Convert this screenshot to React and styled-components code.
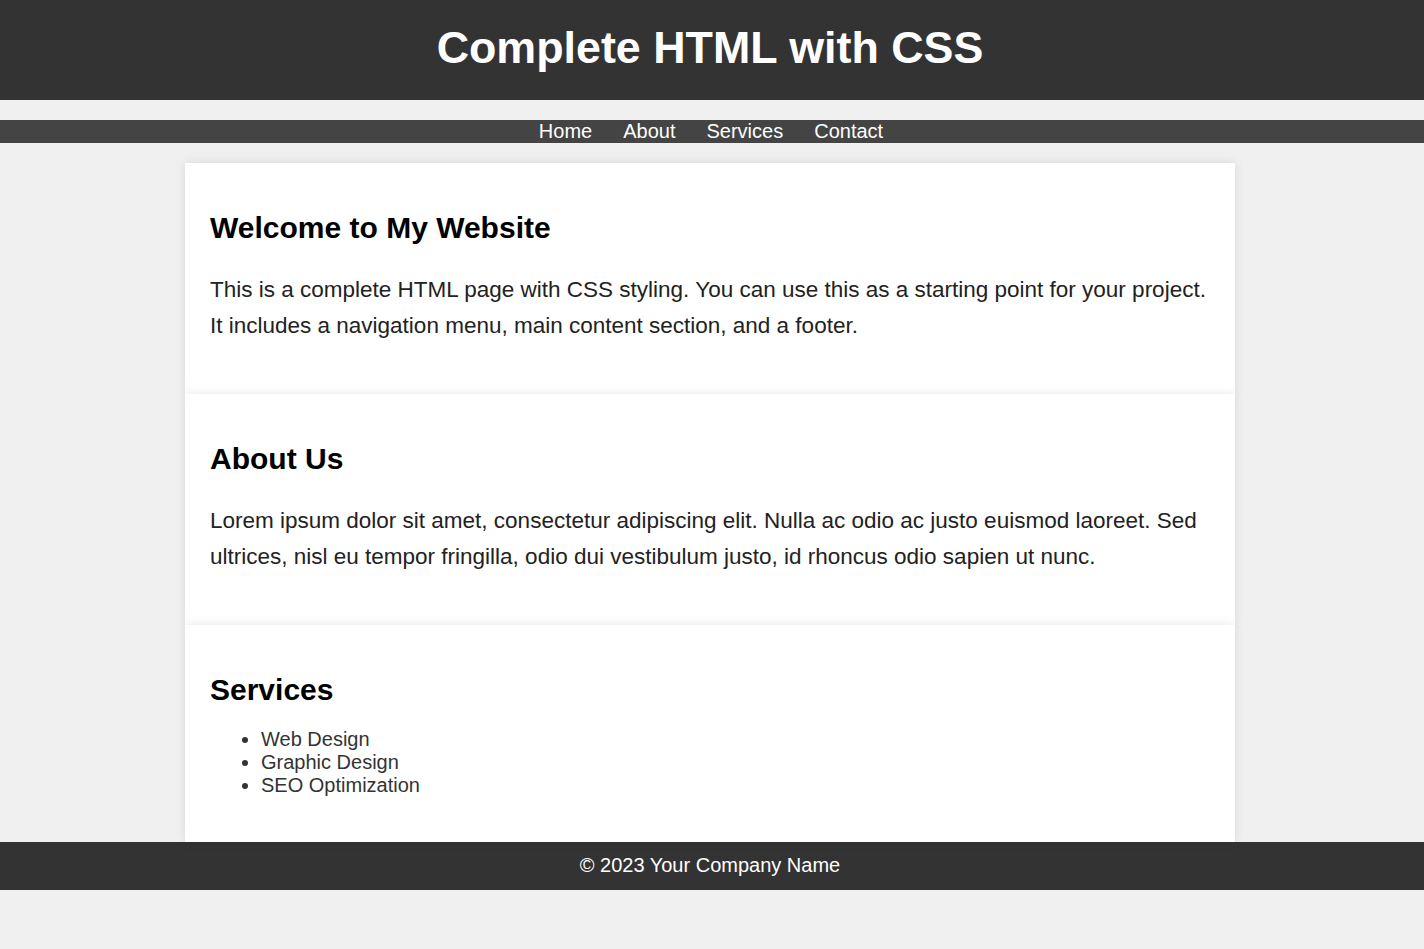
import React from "react";
import styled, { createGlobalStyle } from "styled-components";

const Global = createGlobalStyle`
  html, body {
    margin: 0;
    padding: 0;
    background: #f0f0f0;
    font-family: "Liberation Sans", Arial, sans-serif;
    color: #222;
  }
`;

const Header = styled.header`
  background: #333;
  color: #fff;
  text-align: center;
  padding: 22px 0 26px;
`;

const Title = styled.h1`
  margin: 0;
  font-size: 44.8px;
  font-weight: bold;
  line-height: 51.5px;
  position: relative;
  left: -2px;
`;

const Nav = styled.nav`
  margin-top: 20px;
  background: #444;
  display: flex;
  justify-content: center;
  gap: 31px;
  padding-right: 2px;
`;

const NavLink = styled.a`
  color: #fff;
  text-decoration: none;
  font-size: 20px;
  line-height: 23px;
`;

const Main = styled.main`
  width: 1050px;
  margin: 20px auto 0;
  position: relative;
  left: -2px;
`;

const Section = styled.section`
  background: #fff;
  padding: 25px;
  box-shadow: 0 0 10px rgba(0, 0, 0, 0.1);
  display: flow-root;
`;

const Heading = styled.h2`
  margin: 23.5px 0 20px;
  font-size: 30px;
  line-height: 34.5px;
  font-weight: bold;
  color: #000;
`;

const Para = styled.p`
  margin: 26px 0 25px;
  font-size: 22.5px;
  line-height: 36px;
  color: #222;
`;

const List = styled.ul`
  margin: 20px 0 20px;
  padding-left: 51px;
  font-size: 20px;
  line-height: 23px;
  color: #333;
`;

const Footer = styled.footer`
  background: #333;
  color: #fff;
  text-align: center;
  font-size: 20px;
  line-height: 23px;
  padding: 12.5px 4px 12.5px 0;
`;

export default function App() {
  return (
    <>
      <Global />
      <Header>
        <Title>Complete HTML with CSS</Title>
      </Header>
      <Nav>
        <NavLink href="#">Home</NavLink>
        <NavLink href="#">About</NavLink>
        <NavLink href="#">Services</NavLink>
        <NavLink href="#">Contact</NavLink>
      </Nav>
      <Main>
        <Section>
          <Heading>Welcome to My Website</Heading>
          <Para>
            This is a complete HTML page with CSS styling. You can use this as a
            starting point for your project. It includes a navigation menu, main
            content section, and a footer.
          </Para>
        </Section>
        <Section>
          <Heading>About Us</Heading>
          <Para>
            Lorem ipsum dolor sit amet, consectetur adipiscing elit. Nulla ac odio
            ac justo euismod laoreet. Sed ultrices, nisl eu tempor fringilla, odio
            dui vestibulum justo, id rhoncus odio sapien ut nunc.
          </Para>
        </Section>
        <Section>
          <Heading>Services</Heading>
          <List>
            <li>Web Design</li>
            <li>Graphic Design</li>
            <li>SEO Optimization</li>
          </List>
        </Section>
      </Main>
      <Footer>© 2023 Your Company Name</Footer>
    </>
  );
}
